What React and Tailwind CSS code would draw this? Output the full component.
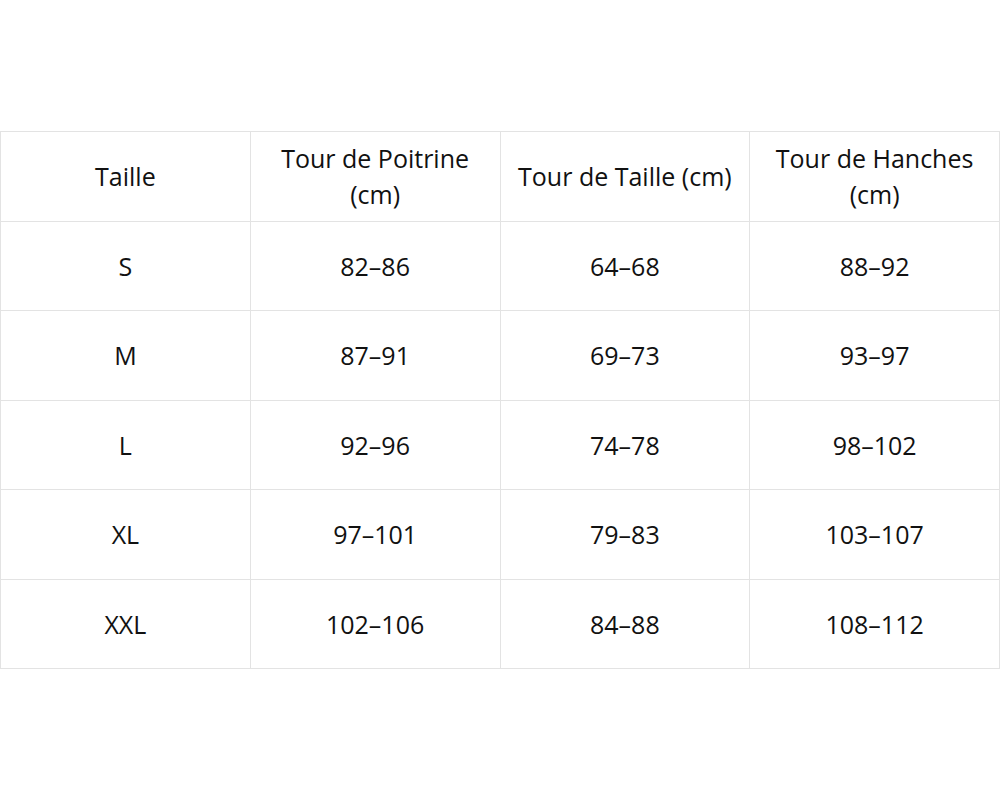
const headers = [
  "Taille",
  "Tour de Poitrine (cm)",
  "Tour de Taille (cm)",
  "Tour de Hanches (cm)",
];

const rows = [
  ["S", "82–86", "64–68", "88–92"],
  ["M", "87–91", "69–73", "93–97"],
  ["L", "92–96", "74–78", "98–102"],
  ["XL", "97–101", "79–83", "103–107"],
  ["XXL", "102–106", "84–88", "108–112"],
];

export default function App() {
  return (
    <div className="flex min-h-screen items-center bg-white font-['Open_Sans',sans-serif] text-[#111111]">
      {/* Size chart */}
      <table className="w-full table-fixed border-collapse text-center text-[25px] leading-[36px]">
        <thead>
          <tr>
            {headers.map((h) => (
              <th
                key={h}
                className="h-[89.5px] border border-[#e3e3e3] px-3 font-normal"
              >
                {h}
              </th>
            ))}
          </tr>
        </thead>
        <tbody>
          {rows.map((row) => (
            <tr key={row[0]}>
              {row.map((cell, i) => (
                <td
                  key={i}
                  className="h-[89.5px] border border-[#e3e3e3] px-3"
                >
                  {cell}
                </td>
              ))}
            </tr>
          ))}
        </tbody>
      </table>
    </div>
  );
}
